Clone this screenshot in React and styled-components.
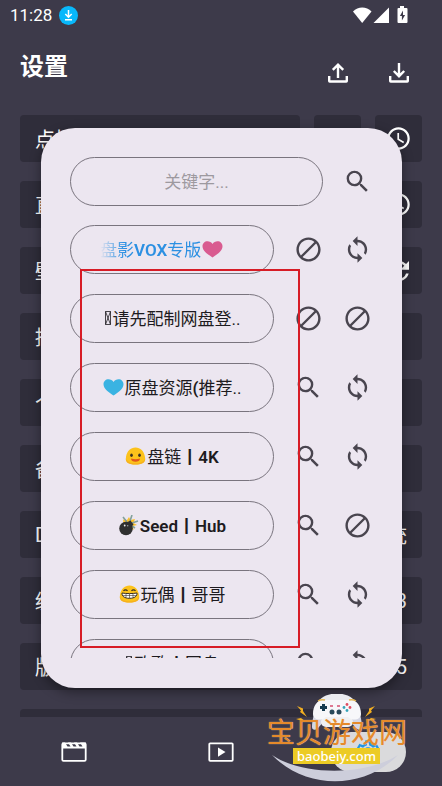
import React from 'react'
import styled, { createGlobalStyle, css } from 'styled-components'
import {
  MdAccessTime,
  MdOutlineSettings,
  MdRefresh,
  MdSearch,
  MdSync,
} from 'react-icons/md'

const settings = [
  { label: '点播', icons: 2 },
  { label: '直播', icons: 2 },
  { label: '壁纸', icons: 2, refresh: true },
  { label: '播放' },
  { label: '个性' },
  { label: '备份' },
  { label: 'DNS', value: '系统' },
  { label: '缓存', value: '0.3' },
  { label: '版本', value: '2.5' },
  { label: '' },
]

const sites = [
  { name: '盘影VOX专版', emoji: 'pink', active: true, search: false, change: true },
  { name: '请先配制网盘登..', emoji: 'missing', search: false, change: false },
  { name: '原盘资源(推荐..', emoji: 'blue', search: true, change: true },
  { name: '盘链丨4K', emoji: 'smile', search: true, change: true },
  { name: 'Seed丨Hub', emoji: 'bomb', search: true, change: false },
  { name: '玩偶丨哥哥', emoji: 'grin', search: true, change: true },
  { name: '欧歌丨网盘', emoji: 'missing', search: true, change: true },
]

function Heart({ color }) {
  return (
    <svg width='21' height='21' viewBox='0 0 21 21' aria-hidden='true'>
      <path fill={color} d='M10.5 18.5C6.5 15.6 0.500 12.400 0.500 7.200 0.500 4.300 2.700 2.200 5.500 2.200c2 0 4 1 5 2.700 1-1.700 3-2.700 5-2.700 2.800 0 5 2.100 5 5 0 5.200-6 8.400-10 11.300z' />
    </svg>
  )
}

function Emoji({ kind }) {
  if (kind === 'pink') return <Heart color='#d95b90' />
  if (kind === 'blue') return <Heart color='#3ab3e2' />
  if (kind === 'missing') {
    return (
      <svg width='8' height='17' viewBox='0 0 8 17' aria-hidden='true'>
        <path d='M1.500 1.500h5v13h-5zM1.500 1.500l5 13M6.500 1.500l-5 13' fill='none' stroke='#1d1b20' strokeWidth='0.800' />
      </svg>
    )
  }
  if (kind === 'bomb') {
    return (
      <svg width='21' height='21' viewBox='0 0 21 21' aria-hidden='true'>
        <path fill='#fbc02d' d='M5 4.500l4 .5 2-3 1.500 3L17 4l-1.500 4 3.500 2-4 1 .5 4-4-2-6-5z' />
        <path fill='none' stroke='#82a09a' strokeWidth='1.600' d='M5 2l4 5M14 0l-2 6M20 6l-6 2M17 13l-3-2' />
        <circle cx='8' cy='13.500' r='6.800' fill='#303030' />
        <path fill='#303030' d='M9.500 7l3-1.500 3 4-2 2z' />
        <circle cx='6.700' cy='10.500' r='0.900' fill='#eee' />
        <circle cx='9.700' cy='10.800' r='0.700' fill='#aaa' />
      </svg>
    )
  }
  return (
    <svg width='21' height='21' viewBox='0 0 21 21' aria-hidden='true'>
      <path fill='#fcc21b' d='M10.500 1.500C15.500 1.500 19 5 20 11c1 5.500-3 7.500-9.500 7.500S0 16.500 1 11c1-6 4.500-9.500 9.500-9.500z' />
      <path fill='#f6b01f' d='M.8 12.500c-.3 4.500 3.700 6 9.700 6s10-1.500 9.700-6c-1.500 3.500-5.200 4.700-9.700 4.700s-8.200-1.200-9.700-4.700z' />
      {kind === 'smile' ? (
        <>
          <ellipse cx='6.500' cy='9.300' rx='1.300' ry='1.700' fill='#3b3022' />
          <ellipse cx='14.500' cy='9.300' rx='1.300' ry='1.700' fill='#3b3022' />
          <path fill='#e2571c' d='M6 12.500c3 1 6 1 9 0 0 2.200-2 3.300-4.500 3.300S6 14.700 6 12.500z' />
        </>
      ) : (
        <>
          <path d='M4.500 7c1-1.500 3-1.500 4 0M12.500 7c1-1.500 3-1.500 4 0' fill='none' stroke='#3b3022' strokeWidth='1.200' />
          <path fill='#fff' stroke='#3b3022' strokeWidth='1' d='M3 9c4 .8 11 .8 15 0 .3 3.200-2.500 5.300-7.500 5.300S2.700 12.200 3 9z' />
          <path stroke='#3b3022' strokeWidth='0.600' d='M7 9.500v4.300M10.500 9.500v4.800M14 9.500v4.300M3.500 11.500h14' />
        </>
      )}
    </svg>
  )
}

function Forbidden() {
  return (
    <svg width='29' height='29' viewBox='0 0 24 24' fill='currentColor' aria-hidden='true'>
      <path d='M12 2C6.500 2 2 6.500 2 12s4.500 10 10 10 10-4.500 10-10S17.500 2 12 2zM4 12c0-4.400 3.600-8 8-8 1.800 0 3.500.6 4.900 1.700L5.700 16.900C4.600 15.500 4 13.800 4 12zm8 8c-1.800 0-3.500-.6-4.900-1.700L18.300 7.100C19.400 8.500 20 10.200 20 12c0 4.400-3.600 8-8 8z' />
    </svg>
  )
}

function Transfer({ up }) {
  return (
    <svg width='22' height='22' viewBox='0 0 22 22' fill='none' stroke='#fff' strokeWidth='2.400' aria-hidden='true'>
      <path d='M2.200 14v5q0 .5.500.5h16.600q.5 0 .5-.5v-5' />
      <path d={up ? 'M11 16V3M5.800 7.800L11 2.600l5.200 5.200' : 'M11 1v13M5.800 9l5.200 5.200L16.200 9'} />
    </svg>
  )
}

function Movie() {
  return (
    <svg width='26' height='20' viewBox='0 0 26 20' aria-hidden='true'>
      <rect x='1.300' y='1.300' width='23.400' height='17.600' rx='1.200' fill='none' stroke='#fff' strokeWidth='1.800' />
      <path fill='#fff' d='M1 0.500h3l2.500 4h3l-2.500-4h3l2.500 4h3l-2.500-4h3l2.500 4h3l-2.500-4H25v6H1z' />
    </svg>
  )
}

function Play() {
  return (
    <svg width='26' height='20' viewBox='0 0 26 20' aria-hidden='true'>
      <rect x='1.300' y='1.300' width='23.400' height='17.600' rx='0.800' fill='none' stroke='#fff' strokeWidth='1.800' />
      <path fill='#fff' d='M10 5.500v9.200l7.500-4.600z' />
    </svg>
  )
}

function StatusIcons() {
  return (
    <svg width='56' height='18' viewBox='0 0 56 18' fill='#fff' aria-hidden='true'>
      <path d='M0 5.500C5 .3 13.500.3 18.500 5.500L9.200 17z' />
      <path d='M36 1.500V17H20.500z' />
      <path fillRule='evenodd' d='M47 0h4v2h2.500q1 0 1 1v13q0 1-1 1h-8q-1 0-1-1V3q0-1 1-1H47zM50 4.500L46.900 10h2v4.500l3.200-5.500h-2.100z' />
    </svg>
  )
}

function WatermarkArt() {
  return (
    <svg width='142' height='92' viewBox='0 0 142 92' aria-hidden='true'>
      <path fill='#cdcedb' d='M5 61c30 21 94 21 126 0-34 35-92 35-126 0z' />
      <g transform='translate(1 -2)'>
        <path fill='#e9eaef' d='M48 15C51-3 87-3 89 15z' />
        <path fill='#d4d6e4' d='M50 13c-3 4-6 15-6 22 0 3 3 4 6 1l8-9h22l8 9c3 3 6 2 6-1 0-7-3-18-6-22z' />
        <rect x='53' y='25' width='32' height='10' rx='5' fill='#f0f0f2' />
        <path fill='#f7f7fa' d='M45 22c0-8 4-14 11-14h26c7 0 11 6 11 14 0 5-7 8-13 3H58c-6 5-13 2-13-3z' />
        <path fill='none' stroke='#e5b853' strokeWidth='1.500' d='M50 9q3-2 7-1M81 8q4-1 7 1' />
        <path stroke='#163b50' strokeWidth='3' d='M52 15.500h7M55.500 12v7' />
        <circle cx='64' cy='20' r='2.500' fill='#27485a' />
        <circle cx='71' cy='20' r='2.500' fill='#27485a' />
        <path stroke='#d65072' strokeWidth='1.500' d='M62 14h3M69 14h3' />
        <circle cx='76' cy='15.500' r='1.400' fill='#36a5b9' />
        <circle cx='82' cy='15.500' r='1.400' fill='#df4f62' />
        <circle cx='79' cy='12.500' r='1.400' fill='#df4f62' />
        <circle cx='79' cy='18.500' r='1.400' fill='#36a5b9' />
        <path fill='#f0ae22' d='M29 14l6 2.500v2.500l4 6-7-5 1-1.500zM107 14l-6 2.500v2.500l-4 6 7-5-1-1.500zM28 27l5-1 4 3-6-1zM108 27l-5-1-4 3 6-1z' />
      </g>
    </svg>
  )
}

function App() {
  return (
    <Page>
      <GlobalStyle />
      <StatusBar>
        <Time>11:28</Time>
        <svg width='19' height='19' viewBox='0 0 19 19' aria-hidden='true'>
          <circle cx='9.500' cy='9.500' r='9.500' fill='#08b8fb' />
          <path d='M9.500 4v7M6.300 8l3.200 3.200L12.700 8M6 13.800h7' fill='none' stroke='#fff' strokeWidth='1.500' />
        </svg>
        <StatusEnd>
          <StatusIcons />
        </StatusEnd>
      </StatusBar>
      <Header>
        <Title>设置</Title>
        <HeaderButton aria-label='上传'><Transfer up /></HeaderButton>
        <HeaderButton aria-label='下载'><Transfer /></HeaderButton>
      </Header>
      <SettingList>
        {settings.map((item, index) => (
          <SettingRow key={index}>
            <SettingCard>
              <span>{item.label}</span>
              <span>{item.value}</span>
            </SettingCard>
            {item.icons && (
              <>
                <SettingButton aria-label='首页' />
                <SettingButton aria-label='历史'>
                  {item.refresh ? <MdRefresh size={30} /> : <MdAccessTime size={27} />}
                </SettingButton>
              </>
            )}
          </SettingRow>
        ))}
      </SettingList>
      <Nav>
        <NavItem aria-label='点播'><Movie /></NavItem>
        <NavItem aria-label='直播'><Play /></NavItem>
        <NavItem aria-label='设置'>
          <NavActive><MdOutlineSettings size={28} /></NavActive>
        </NavItem>
      </Nav>

      <Overlay>
        <Dialog role='dialog' aria-label='站点'>
          <Row>
            <SearchInput aria-label='关键字' placeholder='关键字...' />
            <IconButton aria-label='搜索'><MdSearch size={29} /></IconButton>
          </Row>
          <SiteList>
            {sites.map((site) => (
              <Row key={site.name}>
                <SiteButton $active={site.active}>
                  <SiteName $active={site.active}>
                    {!site.active && <Emoji kind={site.emoji} />}
                    <span>
                      {site.name.split(/([A-Za-z0-9丨(]+)/).map((part, i) => (
                        i % 2 ? <b key={i}>{part}</b> : part
                      ))}
                    </span>
                    {site.active && <Emoji kind={site.emoji} />}
                  </SiteName>
                </SiteButton>
                <IconButton aria-label='搜索开关'>
                  {site.search ? <MdSearch size={29} /> : <Forbidden />}
                </IconButton>
                <IconButton aria-label='换源开关'>
                  {site.change ? <MdSync size={29} /> : <Forbidden />}
                </IconButton>
              </Row>
            ))}
          </SiteList>
        </Dialog>
      </Overlay>

      <Highlight />
      <Watermark>
        <WatermarkArt />
        <WatermarkName>宝贝游戏网</WatermarkName>
        <WatermarkSite>baobeiy.com</WatermarkSite>
      </Watermark>
    </Page>
  )
}

export default App

const GlobalStyle = createGlobalStyle`
  * {
    box-sizing: border-box;
  }

  body {
    margin: 0;
    background: #3d3a4a;
    font-family: Roboto, 'Noto Sans CJK SC', sans-serif;
  }

  button, input {
    font-family: inherit;
    margin: 0;
    padding: 0;
    border: none;
    background: none;
    color: inherit;
  }

  button {
    cursor: pointer;
  }

  svg {
    display: block;
    flex-shrink: 0;
  }
`

const Page = styled.div`
  position: relative;
  display: flex;
  flex-direction: column;
  height: 100vh;
  overflow: hidden;
  color: #fff;
`

const StatusBar = styled.div`
  display: flex;
  align-items: center;
  gap: 7px;
  height: 30px;
  padding: 0 33px 0 10px;
`

const Time = styled.span`
  font-size: 17px;
  line-height: 30px;
`

const StatusEnd = styled.div`
  margin-left: auto;
`

const Header = styled.header`
  display: flex;
  align-items: center;
  height: 85px;
  padding: 0 13px 0 20px;
`

const Title = styled.h1`
  flex: 1;
  margin: 0;
  padding-bottom: 12px;
  font-size: 24px;
  line-height: 32px;
  font-weight: 700;
`

const HeaderButton = styled.button`
  display: flex;
  align-items: center;
  justify-content: center;
  width: 61px;
  height: 48px;
`

const SettingList = styled.main`
  flex: 1;
  min-height: 0;
  display: flex;
  flex-direction: column;
  gap: 19px;
  padding: 0 20px;
  overflow: hidden;
`

const SettingRow = styled.div`
  display: flex;
  flex-shrink: 0;
  gap: 14px;
  height: 47px;
`

const card = css`
  border-radius: 4px;
  background: #2f2d3a;
`

const SettingCard = styled.div`
  ${card}
  flex: 1;
  display: flex;
  align-items: center;
  justify-content: space-between;
  padding: 0 15px;
  font-size: 20px;
`

const SettingButton = styled.button`
  ${card}
  display: flex;
  align-items: center;
  justify-content: center;
  width: 47px;
`

const Nav = styled.nav`
  display: flex;
  height: 69px;
`

const NavItem = styled.button`
  flex: 1;
  display: flex;
  align-items: center;
  justify-content: center;
`

const NavActive = styled.span`
  display: flex;
  align-items: center;
  justify-content: center;
  width: 75px;
  height: 40px;
  border-radius: 20px;
  background: #dadadc;
  color: #2196e3;
`

const Overlay = styled.div`
  position: absolute;
  inset: 0;
  display: flex;
  padding: 128px 40px 98px 41px;
`

const Dialog = styled.div`
  flex: 1;
  min-width: 0;
  display: flex;
  flex-direction: column;
  gap: 19px;
  padding: 29px 20px 30px 29px;
  border-radius: 34px;
  background: #ece6f0;
  box-shadow: 0 4px 12px rgba(0, 0, 0, .4);
  color: #1d1b20;
`

const SiteList = styled.div`
  flex: 1;
  min-height: 0;
  display: flex;
  flex-direction: column;
  gap: 20px;
  overflow-y: auto;
  scrollbar-width: none;
`

const Row = styled.div`
  display: flex;
  flex-shrink: 0;
  height: 49px;
`

const pill = css`
  flex: 1;
  min-width: 0;
  margin-right: 10px;
  border: 1px solid #79747e;
  border-radius: 25px;
  font-size: 17px;
`

const SearchInput = styled.input`
  ${pill}
  text-align: center;

  &::placeholder {
    color: #9d999f;
    opacity: 1;
  }
`

const SiteButton = styled.button`
  ${pill}
  display: flex;
  align-items: center;
  justify-content: ${(props) => (props.$active ? 'flex-start' : 'center')};
  padding: 0 29px;
`

const SiteName = styled.span`
  display: flex;
  align-items: center;
  gap: 1px;
  line-height: 24px;
  white-space: nowrap;

  b {
    font-weight: 600;
  }

  ${(props) => props.$active && css`
    color: #2c90e2;
    mask-image: linear-gradient(to right, transparent, #000 24px);
  `}
`

const IconButton = styled.button`
  display: flex;
  align-items: center;
  justify-content: center;
  width: 49px;
  color: #49454f;
`

const Highlight = styled.div`
  position: absolute;
  top: 269px;
  left: 80px;
  width: 220px;
  height: 379px;
  border: 2px solid #d71c26;
  pointer-events: none;
`

const Watermark = styled.div`
  position: absolute;
  right: 33px;
  bottom: 0;
  pointer-events: none;
`

const WatermarkName = styled.div`
  position: absolute;
  top: 26px;
  left: 0;
  color: #e58a2b;
  font-size: 28px;
  line-height: 28px;
  white-space: nowrap;
  text-shadow: 0 0 1px #f7d9b5;
`

const WatermarkSite = styled.div`
  position: absolute;
  top: 54px;
  left: 26px;
  padding: 0 4px;
  background: #eccb24;
  color: #fff;
  font-family: 'Noto Sans', sans-serif;
  font-size: 13px;
  line-height: 16px;
  font-weight: 500;
`
